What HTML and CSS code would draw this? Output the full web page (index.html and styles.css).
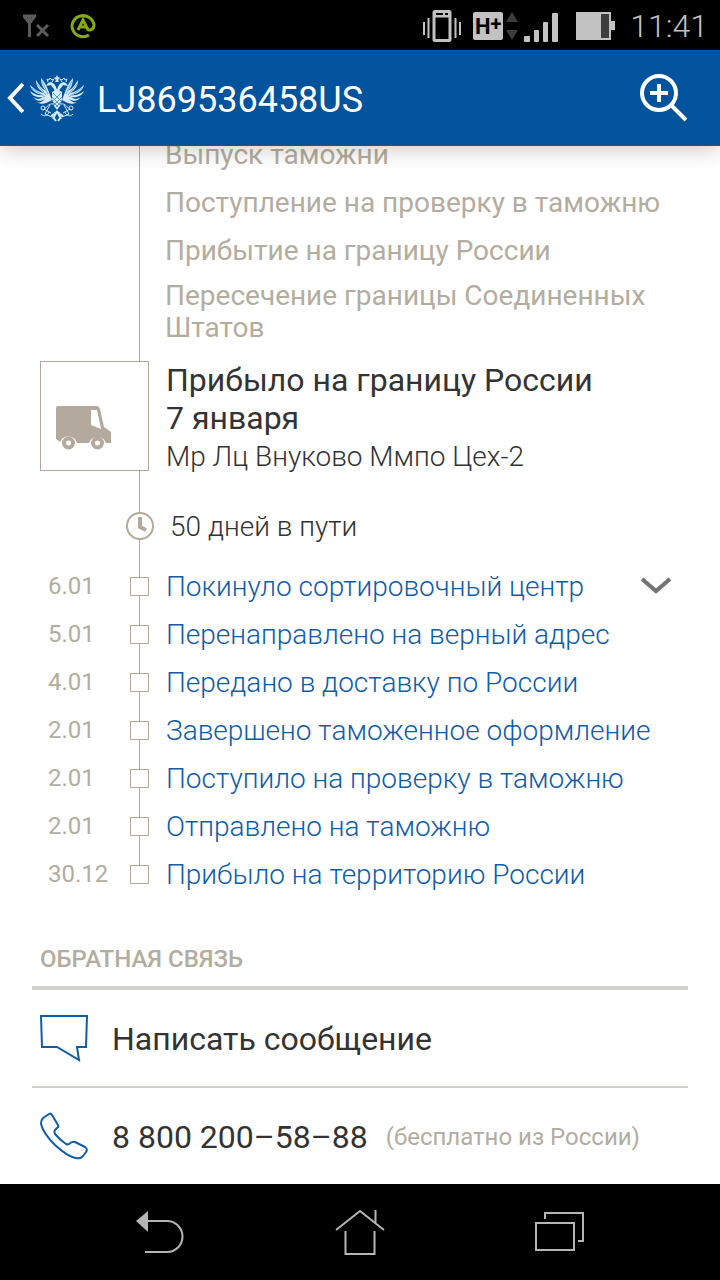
FILE: index.html
```html
<!DOCTYPE html>
<html lang="ru">
<head>
    <meta charset="UTF-8">
    <meta name="viewport" content="width=device-width, initial-scale=1.0">
    <title>LJ869536458US</title>
    <link rel="stylesheet" href="styles.css">
</head>
<body>
    <div class="top">
        <div class="status-bar">
            <div class="status-left">
                <svg width="28" height="24" viewBox="0 0 28 24" fill="none" stroke="#5c5c5c" stroke-width="3">
                    <path d="M1 2H14M2 2L7.500 9L13 2M7.500 2V23M15 11L26 22M26 11L15 22"/>
                </svg>
                <svg width="26" height="26" viewBox="0 0 26 26" fill="none" stroke="#86aa12" stroke-width="3">
                    <path d="M19 22A11 10.500 0 1 1 24 12C24 17 19 18 17.500 16L13 7L8 17M10 14H16"/>
                </svg>
            </div>
            <div class="status-right">
                <svg width="38" height="32" viewBox="0 0 38 32" fill="none" stroke="#c2c2c2">
                    <rect x="11" y="1.500" width="16" height="29" rx="1" stroke-width="3"/>
                    <path d="M11 5H27" stroke-width="5"/>
                    <path d="M13 4H20M22 4H25" stroke="#000" stroke-width="2"/>
                    <path d="M1 12V25M5.500 8V28M32.500 8V28M37 12V25" stroke-width="2"/>
                </svg>
                <span class="network">H<sup>+</sup></span>
                <svg class="data" width="12" height="28" viewBox="0 0 12 28" fill="#3d3d3d">
                    <path d="M6 0L12 10H0ZM6 28L12 18H0Z"/>
                </svg>
                <svg class="signal" width="34" height="29" viewBox="0 0 34 29" fill="#c2c2c2">
                    <rect x="0" y="23" width="6" height="6" rx="1"/>
                    <rect x="10" y="17" width="5" height="12" rx="1"/>
                    <rect x="19" y="9" width="5" height="20" rx="1"/>
                    <rect x="28" y="0" width="6" height="29" rx="1"/>
                </svg>
                <svg class="battery" width="39" height="28" viewBox="0 0 39 28">
                    <path d="M0 0H35V9H39V18H35V28H0Z" fill="#c2c2c2"/>
                    <path d="M25 2H33V26H25Z" fill="#3d3d3d"/>
                </svg>
                <span class="time">11:41</span>
            </div>
        </div>
        <header class="app-bar">
            <button class="back" type="button" aria-label="Назад">
                <svg width="18" height="32" viewBox="0 0 18 32" fill="none" stroke="#fff" stroke-width="4">
                    <path d="M17 2L4 16L17 30"/>
                </svg>
                <svg width="58" height="48" viewBox="0 0 58 48" fill="#d3eaff" stroke="#d3eaff">
                    <defs>
                        <g id="half">
                            <!-- wing feathers -->
                            <path d="M24 26C21 19 19 10 13 4C13 10 15 14 18 17C14 15 11 11 8 6C8 12 11 16 16 19C11 18 6 15 2 11C3 16 8 20 15 21C10 22 6 20 2 17C4 22 9 24 15 23C11 26 8 25 5 23C8 27 12 28 17 25C14 28 12 29 9 28C13 31 18 30 24 26Z" stroke="none"/>
                            <path d="M14 7L20 20M9 10L18 21M4 14L17 23" fill="none" stroke="#6fa9da" stroke-width="1"/>
                            <!-- head and crown -->
                            <path d="M27 19C27 14 24 14 23 11L18 12L20 9C23 7 28 9 29 17Z" stroke="none"/>
                            <path d="M20 8L19 5L21 6L22 4L24 6L26 5L24 8" fill="none" stroke-width="1"/>
                            <!-- leg and tail scrolls -->
                            <path d="M25 30C20 29 19 34 15 36M22 31L17 40L24 43L27 38M13 40C16 43 20 42 21 38M16 35L23 39" fill="none" stroke-width="1"/>
                            <circle cx="15" cy="34" r="2" fill="none"/>
                            <path d="M29 37L25 45M25 43L28 47M23 42L26 40" fill="none" stroke-width="2"/>
                        </g>
                    </defs>
                    <use href="#half"/>
                    <use href="#half" transform="matrix(-1 0 0 1 58 0)"/>
                    <path d="M29 1L30 3L32 4L30 6L31 8H27L28 6L26 4L28 3Z" stroke="none"/>
                    <path d="M24 18L29 15L34 18L34 25L32 32L29 36L26 32L24 25Z" stroke="none"/>
                    <path d="M25 19L33 27M24 23L32 31M25 28L30 33M33 19L25 27M34 23L26 31M33 28L28 33" fill="none" stroke="#5b99cf" stroke-width="1"/>
                </svg>
            </button>
            <h1>LJ869536458US</h1>
            <button class="search" type="button" aria-label="Добавить отправление">
                <svg width="48" height="48" viewBox="0 0 48 48" fill="none" stroke="#fff" stroke-width="4">
                    <circle cx="19" cy="19" r="17"/>
                    <path d="M10 19H28M19 10V28M31 31L46 46"/>
                </svg>
            </button>
        </header>
    </div>

    <main>
        <section class="timeline">
            <ul class="plan">
                <li>Выпуск таможни</li>
                <li>Поступление на проверку в таможню</li>
                <li>Прибытие на границу России</li>
                <li class="wrap">Пересечение границы Соединенных Штатов</li>
            </ul>

            <div class="current">
                <div class="current-icon">
                    <svg width="56" height="44" viewBox="0 0 56 44">
                        <path fill="#b3aa9d" d="M2 0H41Q43 0 44 3L48 21L55 26V37H50A9 9 0 0 0 33 37H21A9 9 0 0 0 4 36L0 33V2Q0 0 2 0Z"/>
                        <path fill="#fff" d="M35 4H41L45 23L35 19Z"/>
                        <circle cx="12.500" cy="37" r="4.500" fill="none" stroke="#b3aa9d" stroke-width="4"/>
                        <circle cx="41.500" cy="37" r="4.500" fill="none" stroke="#b3aa9d" stroke-width="4"/>
                    </svg>
                </div>
                <div>
                    <h2>Прибыло на границу России<br>7 января</h2>
                    <p class="place">Мр Лц Внуково Ммпо Цех-2</p>
                </div>
            </div>

            <div class="duration">
                <svg width="30" height="30" viewBox="0 0 30 30">
                    <circle cx="15" cy="15" r="13" fill="#fff" stroke="#b3aa9d" stroke-width="2"/>
                    <path d="M15 6V16L21 19" fill="none" stroke="#b3aa9d" stroke-width="4"/>
                </svg>
                <span>50 дней в пути</span>
            </div>

            <ol class="events">
                <li>
                    <time>6.01</time><i class="mark"></i><a href="#">Покинуло сортировочный центр</a>
                    <button class="toggle" type="button" aria-label="Свернуть">
                        <svg width="32" height="18" viewBox="0 0 32 18" fill="none" stroke="#737373" stroke-width="4">
                            <path d="M2 2L16 14L30 2"/>
                        </svg>
                    </button>
                </li>
                <li><time>5.01</time><i class="mark"></i><a href="#">Перенаправлено на верный адрес</a></li>
                <li><time>4.01</time><i class="mark"></i><a href="#">Передано в доставку по России</a></li>
                <li><time>2.01</time><i class="mark"></i><a href="#">Завершено таможенное оформление</a></li>
                <li><time>2.01</time><i class="mark"></i><a href="#">Поступило на проверку в таможню</a></li>
                <li><time>2.01</time><i class="mark"></i><a href="#">Отправлено на таможню</a></li>
                <li><time>30.12</time><i class="mark"></i><a href="#">Прибыло на территорию России</a></li>
            </ol>
        </section>

        <section class="feedback">
            <h3>ОБРАТНАЯ СВЯЗЬ</h3>
            <a class="contact" href="#">
                <svg width="48" height="48" viewBox="0 0 48 48" fill="none" stroke="#0f5da8" stroke-width="2">
                    <path d="M1 2H47L46 33H37L39 46L17 33H2Z"/>
                </svg>
                <span>Написать сообщение</span>
            </a>
            <a class="contact" href="tel:88002005888">
                <svg width="48" height="48" viewBox="0 0 48 48" fill="none" stroke="#0f5da8" stroke-width="2" stroke-linejoin="round">
                    <path d="M3 6L9 2Q11 1 12 3L18 13Q19 15 17 16L15 18Q14 19 15 22Q20 28 26 32Q28 33 29 32Q32 29 35 30L45 35Q48 37 46 40L43 44Q41 47 36 46Q28 45 15 33Q3 21 1 12Q1 8 3 6Z"/>
                </svg>
                <span>8 800 200–58–88</span>
                <small>(бесплатно из России)</small>
            </a>
        </section>
    </main>

    <nav class="nav-bar">
        <button type="button" aria-label="Назад">
            <svg width="48" height="48" viewBox="0 0 48 48" fill="none" stroke="#b5b5b5" stroke-width="2">
                <path d="M10 13H31A15.500 15.500 0 0 1 31 44H9"/>
                <path d="M0 13L12 3V24Z" fill="#b5b5b5" stroke="none"/>
            </svg>
        </button>
        <button type="button" aria-label="Домой">
            <svg width="50" height="48" viewBox="0 0 50 48" fill="none" stroke="#b5b5b5" stroke-width="2">
                <path d="M1 22L25 3L49 22M40.500 2V15M10.500 23V46H39.500V23"/>
            </svg>
        </button>
        <button type="button" aria-label="Недавние">
            <svg width="50" height="48" viewBox="0 0 50 48" fill="none" stroke="#b5b5b5" stroke-width="2">
                <path d="M1 15H39V42H1ZM10 11V5H48V33H43"/>
            </svg>
        </button>
    </nav>
</body>
</html>
```

FILE: styles.css
```css
* {
    box-sizing: border-box;
}

body {
    display: flex;
    flex-direction: column;
    min-height: 100vh;
    margin: 0;
    background-color: #fff;
    color: #333;
    font-family: Roboto, "Liberation Sans", sans-serif;
}

h1, h2, h3, p, ul, ol {
    margin: 0;
    padding: 0;
    font-weight: 400;
}

li {
    list-style: none;
}

a {
    text-decoration: none;
}

svg {
    display: block;
    flex-shrink: 0;
}

button {
    display: flex;
    align-items: center;
    border: none;
    padding: 0;
    background: none;
    cursor: pointer;
}

.top {
    position: sticky;
    top: 0;
    z-index: 2;
}

.status-bar {
    display: flex;
    justify-content: space-between;
    align-items: center;
    height: 50px;
    padding: 2px 12px 0 22px;
    background-color: #000;
}

.status-left {
    display: flex;
    align-items: center;
    gap: 20px;
}

.status-right {
    display: flex;
    align-items: center;
    color: #c2c2c2;
}

.network {
    display: flex;
    justify-content: center;
    align-items: center;
    width: 30px;
    height: 28px;
    margin-left: 12px;
    border-radius: 2px;
    background-color: #c2c2c2;
    color: #000;
    font-size: 22px;
    font-weight: 700;
}

.network sup {
    align-self: flex-start;
    font-size: 20px;
    line-height: 24px;
}

.data {
    margin-left: 3px;
}

.signal {
    margin: 2px 18px 0 6px;
}

.time {
    margin-left: 15px;
    font-size: 32px;
    font-weight: 300;
    line-height: 36px;
}

.app-bar {
    display: flex;
    align-items: center;
    height: 96px;
    padding: 0 32px 0 6px;
    background-color: #00539c;
    color: #fff;
    box-shadow: 0 4px 20px rgba(0, 0, 0, 0.2);
}

.back {
    gap: 4px;
}

.app-bar h1 {
    flex: 1;
    margin-left: 11px;
    padding-top: 3px;
    font-size: 36px;
}

main {
    flex: 1;
    margin-top: -16px;
}

.timeline {
    position: relative;
}

/* vertical line behind all the steps */
.timeline::before {
    content: "";
    position: absolute;
    top: 0;
    bottom: 24px;
    left: 139px;
    width: 1px;
    background-color: #b3aa9d;
}

.plan {
    padding: 1px 32px 17px 165px;
    color: #b3ada0;
    font-size: 28px;
    line-height: 48px;
}

.plan .wrap {
    padding-top: 5px;
    line-height: 32px;
}

.current {
    position: relative;
    display: flex;
    gap: 17px;
    padding: 0 32px 0 40px;
}

.current-icon {
    display: flex;
    align-items: flex-end;
    flex-shrink: 0;
    width: 109px;
    height: 110px;
    padding: 0 15px 20px;
    border: 1px solid #b3aa9d;
    background-color: #fff;
}

.current h2 {
    font-size: 32px;
    line-height: 38px;
}

.place {
    font-size: 28px;
    font-weight: 300;
    line-height: 40px;
}

.duration {
    position: relative;
    display: flex;
    align-items: center;
    gap: 15px;
    height: 70px;
    margin: 15px 0 0 125px;
    padding-bottom: 2px;
    font-size: 28px;
    font-weight: 300;
}

.events li {
    position: relative;
    display: grid;
    grid-template-columns: 82px 20px 1fr auto;
    align-items: center;
    height: 48px;
    padding: 0 48px;
}

.events time {
    color: #b3ada0;
    font-size: 24px;
}

.mark {
    width: 19px;
    height: 19px;
    border: 1px solid #b3aa9d;
    background-color: #fff;
}

.events a {
    padding-left: 16px;
    color: #0f5da8;
    font-size: 28px;
    font-weight: 300;
}

.feedback {
    padding: 36px 32px 0;
}

.feedback h3 {
    padding: 9px 8px 11px;
    border-bottom: 4px solid #d4d3cb;
    color: #b3ada0;
    font-size: 24px;
    font-weight: 500;
    line-height: 32px;
}

.contact {
    display: flex;
    align-items: center;
    height: 96px;
    padding-left: 8px;
    color: #333;
    font-size: 32px;
}

.contact + .contact {
    height: 98px;
    border-top: 2px solid #d4d3cb;
}

.contact span {
    margin-left: 24px;
    padding-top: 2px;
}

.contact small {
    margin-left: 18px;
    padding-top: 2px;
    color: #b3ada0;
    font-size: 24px;
}

.nav-bar {
    position: sticky;
    bottom: 0;
    z-index: 2;
    display: flex;
    height: 96px;
    padding: 0 60px;
    background-color: #000;
}

.nav-bar button {
    flex: 1;
    justify-content: center;
}
```
